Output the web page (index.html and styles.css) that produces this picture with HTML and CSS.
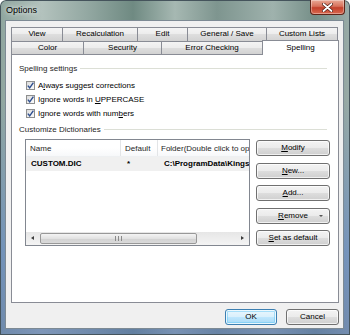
FILE: index.html
```html
<!DOCTYPE html>
<html lang="en">
<head>
  <meta charset="UTF-8" />
  <title>Options</title>
  <link rel="stylesheet" href="styles.css">
</head>
<body>

  <div class="window">
    <div class="titlebar">
      <span class="title">Options</span>
      <button class="close" aria-label="Close">
        <svg width="11" height="9" viewBox="0 0 11 9">
          <path d="M1.5 1 L9.5 8 M9.5 1 L1.5 8" stroke="#4a1a12" stroke-width="3.2" stroke-linecap="round"/>
          <path d="M1.5 1 L9.5 8 M9.5 1 L1.5 8" stroke="#fff" stroke-width="1.8" stroke-linecap="round"/>
        </svg>
      </button>
    </div>

    <div class="client">
      <!-- Tabs -->
      <div class="tab-row row-back">
        <div class="tab">View</div>
        <div class="tab">Recalculation</div>
        <div class="tab">Edit</div>
        <div class="tab">General / Save</div>
        <div class="tab last">Custom Lists</div>
      </div>
      <div class="tab-row row-front">
        <div class="tab">Color</div>
        <div class="tab">Security</div>
        <div class="tab">Error Checking</div>
        <div class="tab last active">Spelling</div>
      </div>

      <div class="panel">
        <div class="group">Spelling settings</div>
        <div class="checks">
          <label class="check"><span class="box"><svg width="9" height="9" viewBox="0 0 9 9"><path d="M1.8 4.6 L3.7 6.8 L7.4 1.6" fill="none" stroke="#2f4f8f" stroke-width="1.4"/></svg></span><span>A<u>l</u>ways suggest corrections</span></label>
          <label class="check"><span class="box"><svg width="9" height="9" viewBox="0 0 9 9"><path d="M1.8 4.6 L3.7 6.8 L7.4 1.6" fill="none" stroke="#2f4f8f" stroke-width="1.4"/></svg></span><span>Ignore words in <u>U</u>PPERCASE</span></label>
          <label class="check"><span class="box"><svg width="9" height="9" viewBox="0 0 9 9"><path d="M1.8 4.6 L3.7 6.8 L7.4 1.6" fill="none" stroke="#2f4f8f" stroke-width="1.4"/></svg></span><span>Ignore words with num<u>b</u>ers</span></label>
        </div>

        <div class="group second">Customize Dictionaries</div>
        <div class="dict">
          <div class="list">
            <div class="list-head">
              <div class="col col-name">Name</div>
              <div class="col col-default">Default</div>
              <div class="col col-folder">Folder(Double click to open)</div>
            </div>
            <div class="list-row">
              <div class="col col-name">CUSTOM.DIC</div>
              <div class="col col-default">*</div>
              <div class="col col-folder">C:\ProgramData\Kingsoft\office6\dict</div>
            </div>
            <div class="hscroll">
              <span class="arrow left"></span>
              <span class="thumb"><span class="grip"></span></span>
              <span class="track"></span>
              <span class="arrow right"></span>
            </div>
          </div>

          <div class="dict-buttons">
            <button class="btn"><u>M</u>odify</button>
            <button class="btn"><u>N</u>ew...</button>
            <button class="btn"><u>A</u>dd...</button>
            <button class="btn btn-menu"><u>R</u>emove<span class="caret"></span></button>
            <button class="btn"><u>S</u>et as default</button>
          </div>
        </div>
      </div>

      <div class="footer">
        <button class="btn ok">OK</button>
        <button class="btn cancel">Cancel</button>
      </div>
    </div>
  </div>

</body>
</html>
```

FILE: styles.css
```css
* {
  box-sizing: border-box;
}

body {
  margin: 0;
  font-family: "Liberation Sans", Arial, sans-serif;
  font-size: 8px;
  color: #000;
}

u {
  text-decoration: underline;
  text-underline-offset: 1px;
}

/* Window frame */
.window {
  width: 350px;
  height: 335px;
  border-radius: 6px 6px 0 0;
  background:
    linear-gradient(to bottom, rgba(120, 160, 220, 0) 30%, rgba(90, 130, 205, 0.55) 75%, rgba(90, 120, 180, 0.6)),
    linear-gradient(to right, #8ea59e, #b3c2bd 12%, #93a8a2 25%, #6f8a82 38%, #a6b8b2 50%, #7e958f 62%, #9fb2ad 78%, #768f88 90%, #9aaca8);
  box-shadow: inset 0 0 0 1px #45545c;
  overflow: hidden;
}

.titlebar {
  height: 20px;
  display: flex;
  justify-content: space-between;
  align-items: flex-start;
  padding-left: 6px;
}

.title {
  margin-top: 5px;
  font-size: 9px;
  line-height: 11px;
  text-shadow: 0 0 4px rgba(255, 255, 255, 0.9), 0 0 8px rgba(255, 255, 255, 0.6);
}

.close {
  width: 35px;
  height: 15px;
  margin-right: 5px;
  padding: 0;
  border: 1px solid #5e2418;
  border-top: none;
  border-radius: 0 0 4px 4px;
  background: linear-gradient(#e9a996, #d7715b 45%, #c2402b 55%, #d9694f);
  box-shadow: inset 0 0 0 1px rgba(255, 255, 255, 0.35);
  display: flex;
  align-items: center;
  justify-content: center;
}

.client {
  margin: 0 6px 0 5px;
  height: 309px;
  border: 1px solid #7d8a94;
  background: #f0f0f0;
  padding: 6px 4px 0 5px;
}

/* Tabs */
.tab-row {
  display: grid;
}

.row-back {
  grid-template-columns: 51px 75px 50px 79px 72px;
  grid-auto-rows: 14px;
}

.row-front {
  grid-template-columns: 72px 78px 101px 77px;
  grid-auto-rows: 13px;
}

.tab {
  height: 100%;
  border-top: 1px solid #898c95;
  border-left: 1px solid #898c95;
  background: linear-gradient(#f4f4f4, #ececec 50%, #dedede 50%, #d2d2d2);
  text-align: center;
  line-height: 12px;
  white-space: nowrap;
}

.tab.last {
  border-right: 1px solid #898c95;
}

.tab.active {
  position: relative;
  z-index: 1;
  height: 15px;
  margin-top: -1px;
  background: #fff;
  line-height: 13px;
}

/* Panel */
.panel {
  height: 249px;
  border: 1px solid #898c95;
  background: #fff;
}

.group {
  display: flex;
  align-items: center;
  margin: 9px 11px 0 7px;
  line-height: 10px;
  color: #1e1e1e;
}

.group::after {
  content: "";
  flex: 1;
  margin-left: 3px;
  margin-top: -1px;
  border-top: 1px solid #dcdfd6;
}

.group.second {
  margin-top: 5px;
}

.checks {
  margin: 4px 0 0 14px;
}

.check {
  display: flex;
  align-items: center;
  height: 14px;
  white-space: pre;
}

.box {
  width: 9px;
  height: 9px;
  margin-right: 3px;
  border: 1px solid #8e8f8f;
  background: linear-gradient(135deg, #dcdcdc, #fbfbfb);
  display: flex;
  align-items: center;
  justify-content: center;
}

.box svg {
  margin: -1px;
}

/* Dictionaries */
.dict {
  display: flex;
  align-items: flex-start;
  margin: 4px 0 0 13px;
}

.list {
  width: 225px;
  height: 107px;
  border: 1px solid #828790;
  display: flex;
  flex-direction: column;
  overflow: hidden;
}

.list-head,
.list-row {
  display: flex;
  white-space: nowrap;
}

.list-head {
  height: 17px;
  line-height: 17px;
  background: linear-gradient(#fff, #fff 50%, #f7f8fa);
  border-bottom: 1px solid #eef0f2;
  color: #262626;
}

.list-row {
  height: 14px;
  line-height: 14px;
  background: #f0f0f0;
  font-weight: bold;
}

.col {
  flex: none;
  overflow: hidden;
  padding-left: 4px;
}

.list-head .col {
  border-right: 1px solid #e3e5e7;
}

.col-name {
  width: 95px;
}

.col-default {
  width: 37px;
}

.col-folder {
  width: 120px;
  padding-left: 3px;
}

.list-row .col-name {
  padding-left: 5px;
}

.list-row .col-default {
  padding-left: 6px;
}

.list-row .col-folder {
  padding-left: 6px;
}

.hscroll {
  margin-top: auto;
  height: 13px;
  display: flex;
  align-items: stretch;
  background: linear-gradient(#e6e6e6, #f4f4f4);
}

.arrow {
  width: 13px;
  position: relative;
}

.arrow::before {
  content: "";
  position: absolute;
  top: 4px;
  border-top: 2.5px solid transparent;
  border-bottom: 2.5px solid transparent;
}

.arrow.left::before {
  left: 5px;
  border-right: 3px solid #3c3c3c;
}

.arrow.right::before {
  left: 5px;
  border-left: 3px solid #3c3c3c;
}

.thumb {
  width: 157px;
  margin: 1px 0 1px 1px;
  border: 1px solid #989898;
  border-radius: 2px;
  background: linear-gradient(#f4f4f4, #e2e2e2 50%, #d2d2d2 51%, #dadada);
  display: flex;
  align-items: center;
  justify-content: center;
}

.grip {
  width: 7px;
  height: 5px;
  background: repeating-linear-gradient(to right, #8a8a8a 0 1px, transparent 1px 3px);
}

.track {
  flex: 1;
}

.dict-buttons {
  width: 74px;
  margin: 1px 0 0 6px;
  display: flex;
  flex-direction: column;
  gap: 6.5px;
}

/* Buttons */
.btn {
  height: 16px;
  padding: 0;
  border: 1px solid #707070;
  border-radius: 3px;
  background: linear-gradient(#f3f3f3, #ebebeb 48%, #dddddd 52%, #cfcfcf);
  box-shadow: inset 0 0 0 1px rgba(255, 255, 255, 0.7);
  font-family: inherit;
  font-size: 8px;
  color: #000;
  text-align: center;
  line-height: 14px;
}

.btn-menu {
  position: relative;
}

.caret {
  position: absolute;
  right: 6px;
  top: 6px;
  border-left: 2px solid transparent;
  border-right: 2px solid transparent;
  border-top: 2px solid #555;
}

.footer {
  display: flex;
  justify-content: flex-end;
  gap: 9px;
  margin-top: 6px;
}

.ok {
  width: 52px;
  border-color: #3c7fb1;
  background: linear-gradient(#eaf6fd, #d9f0fc 48%, #bee6fd 52%, #a7d9f5);
  box-shadow: inset 0 0 0 1px rgba(255, 255, 255, 0.8), inset 0 0 0 2px rgba(100, 200, 245, 0.5);
}

.cancel {
  width: 53px;
}
```
